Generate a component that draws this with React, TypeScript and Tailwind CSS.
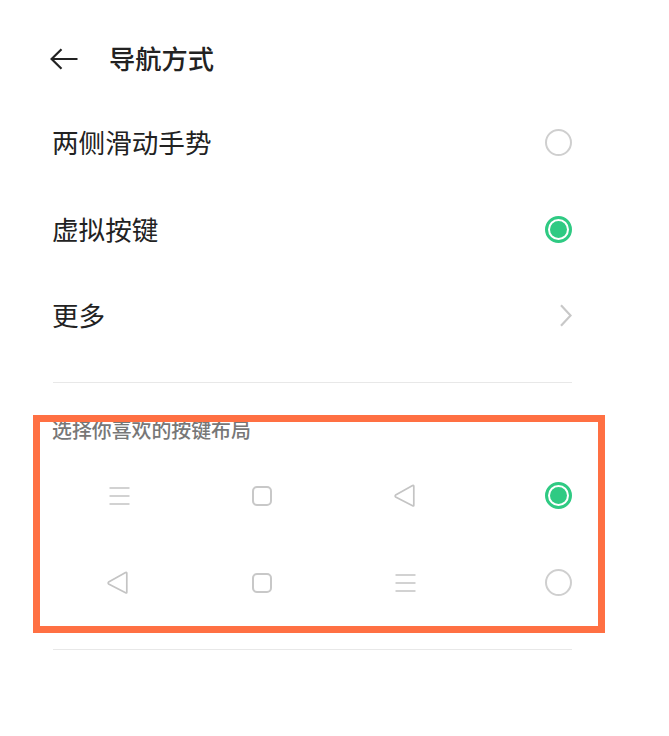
import { ReactNode } from "react"

function Radio({ checked = false }: { checked?: boolean }) {
  if (checked) {
    return (
      <div className="w-[27px] h-[27px] rounded-full border-[3px] border-[#2fca83] flex items-center justify-center">
        <div className="w-[17px] h-[17px] rounded-full bg-[#2fca83]" />
      </div>
    )
  }
  return <div className="w-[27px] h-[27px] rounded-full border-[2.5px] border-[#cfcfcf]" />
}

function MenuIcon({ className }: { className?: string }) {
  return (
    <svg className={className} width="21" height="20" viewBox="0 0 21 20" fill="none" stroke="#c4c4c4" strokeWidth="1.7">
      <path d="M0.5 2h20M0.5 10h20M0.5 18h20" />
    </svg>
  )
}

function SquareIcon() {
  return <div className="w-[20px] h-[20px] rounded-[5px] border-2 border-[#c8c8c8]" />
}

function BackIcon({ className }: { className?: string }) {
  return (
    <svg className={className} width="21" height="23" viewBox="0 0 21 23" fill="none" stroke="#c4c4c4" strokeWidth="1.7" strokeLinejoin="round">
      <path d="M19.8 2.2 V21.2 Q19.8 22.4 18.6 21.8 L1.6 12.9 Q0.8 11.9 1.6 11 L18.6 1.6 Q19.8 1.1 19.8 2.2 Z" />
    </svg>
  )
}

function Row({ label, children }: { label: string; children: ReactNode }) {
  return (
    <div className="h-[86.5px] flex items-center justify-between">
      <span className="-ml-px text-[26.6px] leading-none text-[#222]">{label}</span>
      {children}
    </div>
  )
}

function KeyRow({ icons, checked }: { icons: ReactNode[]; checked?: boolean }) {
  return (
    <div className="h-[87px] grid grid-cols-[132px_154px_130px_1fr] items-center">
      {icons.map((icon, i) => (
        <div key={i} className="flex justify-center">
          {icon}
        </div>
      ))}
      <div className="flex justify-end">
        <Radio checked={checked} />
      </div>
    </div>
  )
}

export default function App() {
  return (
    <div
      className="relative w-[669px] h-[736px] bg-white pl-[53px] pr-[97px] pt-[38px] overflow-hidden"
      style={{ fontFamily: '"Noto Sans CJK SC", "Noto Sans", sans-serif' }}
    >
      <div className="h-[42px] mb-[19.5px] flex items-center">
        <svg className="ml-[-3px]" width="28" height="22" viewBox="0 0 28 22" fill="none" stroke="#222" strokeWidth="2.2">
          <path d="M27.5 11H2M11.5 1.2L1.6 11l9.9 9.8" />
        </svg>
        <span className="ml-[31px] pb-[2px] text-[26.25px] leading-none font-medium text-[#222]">导航方式</span>
      </div>

      <Row label="两侧滑动手势">
        <Radio />
      </Row>
      <Row label="虚拟按键">
        <Radio checked />
      </Row>
      <Row label="更多">
        <svg width="12" height="23" viewBox="0 0 12 23" fill="none" stroke="#c8c8c8" strokeWidth="2.2">
          <path d="M1 1.2L10.6 11.5 1 21.8" />
        </svg>
      </Row>

      <div className="mt-[22.5px] h-px bg-[#e8e8e8]" />

      <div className="mt-[33.5px] -ml-px h-[28px] flex items-center text-[19.9px] leading-none font-medium text-[#777]">
        选择你喜欢的按键布局
      </div>

      <div className="mt-[8px]">
        <KeyRow icons={[<MenuIcon />, <SquareIcon />, <BackIcon />]} checked />
        <KeyRow icons={[<BackIcon className="-ml-[3px]" />, <SquareIcon />, <MenuIcon className="ml-[2px]" />]} />
      </div>

      <div className="mt-[22.5px] h-px bg-[#e8e8e8]" />

      {/* annotation frame on top of the screenshot */}
      <div className="absolute left-[33px] top-[415px] w-[572px] h-[218px] border-[7px] border-[#ff7043] pointer-events-none" />
    </div>
  )
}
